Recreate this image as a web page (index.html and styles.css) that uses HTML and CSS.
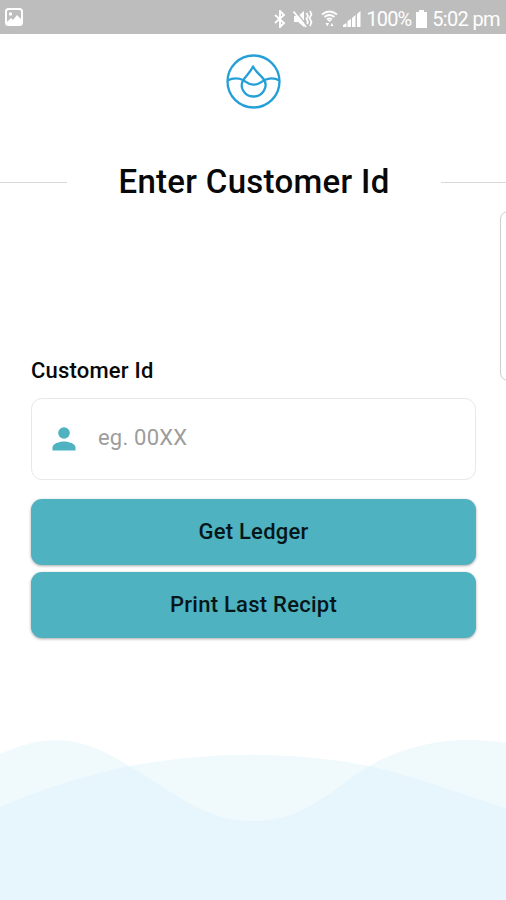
FILE: index.html
```
<!DOCTYPE html>
<html lang="en">
<head>
    <meta charset="UTF-8">
    <title>Enter Customer Id</title>
    <meta name="viewport" content="width=device-width, initial-scale=1.0">
    <link rel="stylesheet" href="styles.css">
</head>
<body>
    <div class="status-bar">
        <svg class="status-picture" width="18" height="18" viewBox="0 0 18 18">
            <rect x="1" y="1" width="16" height="16" rx="2.5" fill="none" stroke="#fff" stroke-width="2"/>
            <circle cx="5.5" cy="6" r="1.7" fill="#fff"/>
            <path d="M2 14l4-4 2 2 4-5 5 5v4H2z" fill="#fff"/>
        </svg>
        <div class="status-right">
            <svg class="bluetooth" width="12" height="18" viewBox="0 0 12 18">
                <path d="M1 5l9 8-4 4V1l4 4-9 8" fill="none" stroke="#fff" stroke-width="1.9"/>
            </svg>
            <svg class="mute" width="20" height="18" viewBox="0 0 20 18">
                <path d="M1 6h4l6-5v16l-6-5H1z" fill="#fff"/>
                <path d="M2 .5l12 15" stroke="#bdbdbd" stroke-width="1.3"/>
                <path d="M.5 1.500l12.500 15.500" stroke="#fff" stroke-width="1.800"/>
                <path d="M13.500 3l1.500 3-1.500 3 1.500 3-1 2M17 1l1.500 3.500-2 3.500 2 4-1.500 4" fill="none" stroke="#fff" stroke-width="1.700"/>
            </svg>
            <svg class="wifi" width="17" height="18" viewBox="0 0 17 18">
                <path d="M1 4.500Q8.500-1.500 16 4.500M3.500 7Q8.500 3 13.500 7M6 9.500q2.500-2 5 0" fill="none" stroke="#fff" stroke-width="1.900"/>
                <path d="M6.500 10h4l-2 2zM4.500 13h3.500l-1.700 3.500zM9.500 16l1.500-3 1.500 3z" fill="#fff"/>
            </svg>
            <svg class="signal" width="18" height="18" viewBox="0 0 18 18">
                <path d="M0 17v-2l3.500-2v4zM4.500 17v-6l3.500-2v8zM9 17V8l3.500-3v12zM14 17V4l3.500-3v16z" fill="#fff"/>
            </svg>
            <span class="percent">100%</span>
            <svg class="battery" width="11" height="18" viewBox="0 0 11 18">
                <path d="M3 0h5v2h3v16H0V2h3z" fill="#fff"/>
            </svg>
            <span class="clock">5:02 pm</span>
        </div>
    </div>

    <main class="screen">
        <svg class="logo" width="57" height="56" viewBox="0 0 57 56" fill="none" stroke="#259fd8" stroke-width="2.300">
            <circle cx="28.500" cy="27.500" r="26"/>
            <path d="M28 12.500c-2 4.500-6 8.500-9 12.500-5.500 7.500 0 17.500 9.300 17.500s15.700-10 10.200-17.500C35.500 21 30 17 28 12.500z" stroke-linejoin="round"/>
            <path d="M2.500 26.500c5-2.500 11-2.500 15.500-.5 3 1.800 5.500 4.700 10.700 4.700s8-2.900 10.800-4.700c4.500-2 10.500-2 15 .5"/>
        </svg>

        <div class="heading">
            <h1>Enter Customer Id</h1>
        </div>

        <div class="form">
            <label for="customer">Customer Id</label>
            <div class="field">
                <svg width="24" height="24" viewBox="0 0 24 24" fill="#4eb2c0">
                    <circle cx="12" cy="6" r="5.800"/>
                    <path d="M.5 23.500v-2.700c0-4.200 6.500-6.300 11.500-6.300s11.500 2.100 11.500 6.300v2.700z"/>
                </svg>
                <input type="text" id="customer" placeholder="eg. 00XX">
            </div>
            <button type="button">Get Ledger</button>
            <button type="button">Print Last Recipt</button>
        </div>
    </main>

    <!-- edge panel handle -->
    <div class="edge-handle"></div>

    <svg class="waves" width="506" height="180" viewBox="0 0 506 180">
        <defs>
            <clipPath id="front">
                <path d="M0 87C45 67 85 56 129 46C215 31 290 31 369 46C420 57 460 74 506 88V180H0z"/>
            </clipPath>
        </defs>
        <path d="M0 34C43 15 78 13 129 46C175 73 205 101 253 101S325 75 369 46C420 18 465 17 506 23V180H0z" fill="#f0fafc"/>
        <path d="M0 87C45 67 85 56 129 46C215 31 290 31 369 46C420 57 460 74 506 88V180H0z" fill="#f0fafc"/>
        <path d="M0 34C43 15 78 13 129 46C175 73 205 101 253 101S325 75 369 46C420 18 465 17 506 23V180H0z" fill="#e7f6fd" clip-path="url(#front)"/>
    </svg>
</body>
</html>
```

FILE: styles.css
```
* {
    box-sizing: border-box;
}
body {
    margin: 0;
    height: 900px;
    display: flex;
    flex-direction: column;
    overflow: hidden;
    position: relative;
    background-color: #fff;
    font-family: Roboto, sans-serif;
    color: #080808;
}
.status-bar {
    height: 34px;
    padding: 0 6px 0 5px;
    display: flex;
    align-items: center;
    justify-content: space-between;
    background-color: #bdbdbd;
    color: #fff;
    font-size: 20px;
}
.status-right {
    display: flex;
    align-items: center;
    padding-top: 3px;
}
.mute {
    margin-left: 7px;
}
.wifi {
    margin-left: 8px;
}
.signal {
    margin-left: 5px;
}
.percent {
    margin-left: 5px;
    letter-spacing: -0.9px;
}
.battery {
    margin-left: 5px;
}
.clock {
    margin-left: 5px;
    letter-spacing: -0.65px;
}
.screen {
    flex: 1;
    display: flex;
    flex-direction: column;
}
.logo {
    align-self: center;
    margin-top: 20px;
}
.heading {
    display: flex;
    align-items: center;
    margin-top: 52px;
}
.heading::before,
.heading::after {
    content: "";
    width: 67px;
    height: 1px;
    background-color: #d9d9d9;
}
.heading::after {
    width: 65px;
}
h1 {
    flex: 1;
    margin: 0;
    text-align: center;
    font-size: 33px;
    font-weight: 500;
    line-height: 40px;
    letter-spacing: 0.3px;
}
.form {
    padding: 0 30px 0 31px;
    margin-top: 156px;
    display: flex;
    flex-direction: column;
}
label {
    font-size: 22px;
    font-weight: 500;
    line-height: 26px;
    letter-spacing: 0.2px;
}
.field {
    display: flex;
    align-items: center;
    height: 82px;
    margin: 14px 0 19px;
    padding: 0 20px;
    gap: 22px;
    border: 1px solid #e8e8e8;
    border-radius: 11px;
}
input {
    flex: 1;
    min-width: 0;
    padding: 0 0 3px;
    border: none;
    outline: none;
    background: none;
    font-family: inherit;
    font-size: 22px;
    letter-spacing: 0.2px;
}
input::placeholder {
    color: #9c9c9c;
}
button {
    height: 66px;
    margin-bottom: 7px;
    padding-bottom: 3px;
    border: none;
    border-radius: 11px;
    background-color: #4eb2c0;
    box-shadow: 0 1px 3px rgba(0, 0, 0, 0.35);
    color: #071619;
    font-family: inherit;
    font-size: 22px;
    font-weight: 500;
    letter-spacing: 0.25px;
}
.edge-handle {
    position: absolute;
    top: 211px;
    right: -10px;
    width: 16px;
    height: 170px;
    border: 1px solid #cfcfcf;
    border-radius: 8px;
    background-color: #fff;
}
.waves {
    display: block;
}
```
